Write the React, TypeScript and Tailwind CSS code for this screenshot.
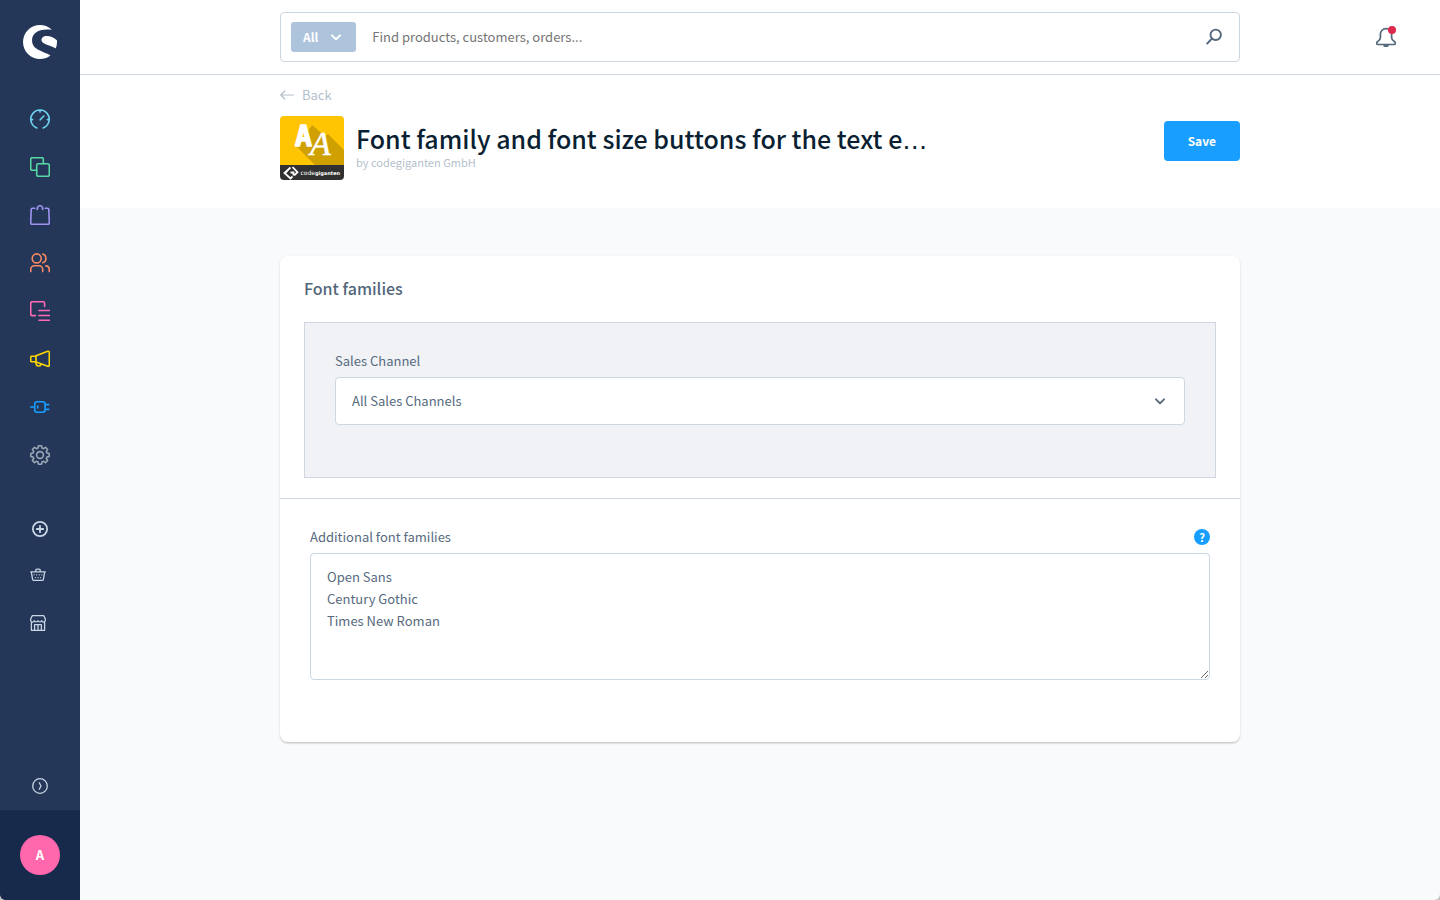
import { useState } from "react";
import type { ReactNode } from "react";
import { SiShopware } from "react-icons/si";

interface IconProps {
  size?: number;
  width?: number;
  children: ReactNode;
}

// Coordinates inside every icon are in screen pixels
const Icon = ({ size = 20, width = 1.6, children }: IconProps) => (
  <svg
    width={size}
    height={size}
    viewBox={`0 0 ${size} ${size}`}
    fill="none"
    stroke="currentColor"
    strokeWidth={width}
    strokeLinecap="round"
    strokeLinejoin="round"
    aria-hidden="true"
  >
    {children}
  </svg>
);

const DashboardIcon = () => (
  <Icon>
    <path d="M6.8 18.9A9.2 9.2 0 1 1 13.2 18.9M10 1.5v1.6M1 10.6h1.6M17.4 10.6H19M10.2 10.8l3.6-3.8" />
  </Icon>
);

const CatalogueIcon = () => (
  <Icon>
    <rect x="6.7" y="6.7" width="12.6" height="12.6" rx="1.6" />
    <path d="M6.7 13.3H2.2A1.5 1.5 0 0 1 .7 11.8V2.2A1.5 1.5 0 0 1 2.2.7h9.6a1.5 1.5 0 0 1 1.5 1.5v4.5" />
  </Icon>
);

const OrdersIcon = () => (
  <Icon>
    <path d="M4.8 3.2H2.4a1.2 1.2 0 0 0-1.2 1.2L.7 17.9a1.3 1.3 0 0 0 1.3 1.4h16a1.3 1.3 0 0 0 1.3-1.4l-.5-13.5a1.2 1.2 0 0 0-1.2-1.2h-2.4" />
    <path d="M7.3 4.4v-1A2.6 2.6 0 0 1 10 .8a2.6 2.6 0 0 1 2.7 2.6v1M7.3 3.2h.4M12.3 3.2h.4" />
  </Icon>
);

const CustomersIcon = () => (
  <Icon>
    <circle cx="6.7" cy="5.4" r="4.5" />
    <path d="M.8 18.6v-2.2a3.6 3.6 0 0 1 3.6-3.6h4.7a3.6 3.6 0 0 1 3.6 3.6v2.2M12.8 1.1a4.5 4.5 0 0 1 0 8.6M15.8 12.9a3.6 3.6 0 0 1 3.4 3.6v2.1" />
  </Icon>
);

const ContentIcon = () => (
  <Icon>
    <path d="M5.4 14.6H2.3a1.6 1.6 0 0 1-1.6-1.6V2.3A1.6 1.6 0 0 1 2.3.7H13a1.6 1.6 0 0 1 1.6 1.6v3.2M9 9.5h10.5M9 14.5h10.5M9 19.2h10.5" />
  </Icon>
);

const MarketingIcon = () => (
  <Icon>
    <path d="M6 6.8 17.8 2.3a1.1 1.1 0 0 1 1.5 1v13a1.1 1.1 0 0 1-1.5 1L6 13z" />
    <path d="M6 7.2H1.7a1 1 0 0 0-1 1v3.6a1 1 0 0 0 1 1H6M6 13v1.6a2.6 2.6 0 0 0 4.9 1" />
  </Icon>
);

const ExtensionsIcon = () => (
  <Icon>
    <path d="M.7 10h3.8M15.2 7.6h3.6M15.2 12.4h3.6M7.7 9v2" />
    <rect x="4.7" y="4.8" width="10.4" height="10.4" rx="2.4" />
  </Icon>
);

const SettingsIcon = () => (
  <Icon>
    <circle cx="10" cy="10" r="3.4" />
    <path d="M8.5.8h3l.5 2.3 1.5.6 2-1.3 2.1 2.1-1.3 2 .6 1.5 2.3.5v3l-2.3.5-.6 1.5 1.3 2-2.1 2.1-2-1.3-1.5.6-.5 2.3h-3L8 16.9l-1.5-.6-2 1.3-2.1-2.1 1.3-2-.6-1.5L.8 11.5v-3L3.1 8l.6-1.5-1.3-2 2.1-2.1 2 1.3L8 3.1z" />
  </Icon>
);

const PlusCircleIcon = () => (
  <Icon size={16} width={1.8}>
    <circle cx="8" cy="8" r="7.1" />
    <path d="M8 4.8v6.4M4.8 8h6.4" />
  </Icon>
);

const BasketIcon = () => (
  <Icon size={16} width={1.3}>
    <path d="M.7 4.8h14.6M1.3 5l1.3 7.3a1.4 1.4 0 0 0 1.4 1.1h8a1.4 1.4 0 0 0 1.4-1.1L14.7 5M5.8 4.6V3.4a1.2 1.2 0 0 1 1.2-1.2h2a1.2 1.2 0 0 1 1.2 1.2v1.2" />
    <path d="M4 7.8h.1M6.6 7.8h.1M9.2 7.8h.1M11.8 7.8h.1M5.4 10.6h.1M8 10.6h.1M10.5 10.6h.1" />
  </Icon>
);

const StoreIcon = () => (
  <Icon size={16} width={1.3}>
    <path d="M2.2.7h11.6l1.5 3.4v1.5a1.9 1.9 0 0 1-3.7 0 1.9 1.9 0 0 1-3.6 0 1.9 1.9 0 0 1-3.6 0 1.9 1.9 0 0 1-3.7 0V4.1zM1.4 7.5v7.8h13.2V7.5" />
    <path d="M4.6 15v-5.4h6.8V15M8 9.6V15" />
  </Icon>
);

const ChevronDown = () => (
  <Icon size={12} width={2}>
    <path d="m2 4.4 4 4 4-4" />
  </Icon>
);

const PluginLogo = () => (
  <svg width="64" height="64" viewBox="0 0 64 64" className="shrink-0 rounded" role="img" aria-label="codegiganten">
    <path fill="#ffc502" d="M0 0h64v49H0z" />
    <path fill="#cfa000" d="m32 9 13 11 3-2 16 16v15H35L17 31z" />
    <path fill="#313131" d="M0 49h64v15H0z" />
    <text
      x="15"
      y="30"
      fill="#fff"
      stroke="#fff"
      strokeWidth="1.4"
      strokeLinejoin="round"
      fontFamily="DejaVu Sans Mono"
      fontWeight="700"
      fontSize="28"
    >
      A
    </text>
    <text x="30" y="39" fill="#fff" stroke="#fff" strokeWidth="0.5" fontFamily="Liberation Serif" fontStyle="italic" fontSize="34">
      A
    </text>
    <path
      d="m10.5 51.5-6 5.5 6 5.5 2-2M12.5 51l5 5.2-3.2 3.2M10.5 56.5h3v3M8.8 53.2l-3.6 3.9"
      stroke="#fff"
      strokeWidth="1.8"
      fill="none"
    />
    <text x="20.5" y="58.5" fill="#fff" fontFamily="DejaVu Sans" fontSize="6">
      code
      <tspan fontWeight="700" fontSize="5">giganten</tspan>
    </text>
  </svg>
);

const mainMenu = [
  { label: "Dashboard", color: "text-[#6ed5f0]", icon: <DashboardIcon /> },
  { label: "Catalogues", color: "text-[#57d9a3]", icon: <CatalogueIcon /> },
  { label: "Orders", color: "text-[#a092f0]", icon: <OrdersIcon /> },
  { label: "Customers", color: "text-[#f88962]", icon: <CustomersIcon /> },
  { label: "Content", color: "text-[#ff68b4]", icon: <ContentIcon /> },
  { label: "Marketing", color: "text-[#ffd700]", icon: <MarketingIcon /> },
  { label: "Extensions", color: "text-[#189eff]", icon: <ExtensionsIcon /> },
  { label: "Settings", color: "text-[#9aa8b5]", icon: <SettingsIcon /> }
];

const Sidebar = () => (
  <aside className="flex w-20 shrink-0 flex-col bg-[#243758] text-[#c9d5e5]">
    <a href="#home" aria-label="Home" className="flex h-[84px] items-center justify-center text-white">
      <SiShopware size={34} />
    </a>

    <nav aria-label="Main menu" className="mt-[11px] flex flex-col">
      {mainMenu.map(({ label, color, icon }) => (
        <a
          key={label}
          href={`#${label.toLowerCase()}`}
          aria-label={label}
          className={`flex h-12 items-center justify-center ${color}`}
        >
          {icon}
        </a>
      ))}
    </nav>

    <nav aria-label="Sales channels" className="mt-7 flex flex-col">
      <button type="button" aria-label="Add sales channel" className="flex h-11 items-center justify-center">
        <PlusCircleIcon />
      </button>
      <a href="#headless" aria-label="Headless" className="flex h-12 items-center justify-center pr-1">
        <BasketIcon />
      </a>
      <a href="#storefront" aria-label="Storefront" className="flex h-12 items-center justify-center pr-1">
        <StoreIcon />
      </a>
    </nav>

    <button type="button" aria-label="Expand menu" className="mt-auto flex h-12 items-center justify-center">
      <Icon size={16} width={1.3}>
        <circle cx="8" cy="8" r="7.3" />
        <path d="M7.3 4.8 9 8l-1.7 3.2" />
      </Icon>
    </button>
    <div className="flex h-[90px] items-center justify-center bg-[#172a4b]">
      <button
        type="button"
        aria-label="User menu"
        className="h-10 w-10 rounded-full bg-[#ff68ac] text-[13px] font-bold text-white"
      >
        A
      </button>
    </div>
  </aside>
);

const TopBar = () => (
  <header className="grid grid-cols-[1fr_minmax(0,960px)_1fr] items-center border-b border-[#cdd7e1] py-3">
    <form className="col-start-2 flex h-[50px] items-center rounded border border-[#cdd7e1] px-2.5">
      <button
        type="button"
        className="flex h-[30px] items-center gap-3 rounded-[3px] bg-[#aec4dd] pr-3.5 pl-3 text-[12px] font-bold text-white"
      >
        All
        <ChevronDown />
      </button>
      <input
        type="search"
        aria-label="Search"
        placeholder="Find products, customers, orders..."
        className="ml-4 min-w-0 flex-1 text-[13px] outline-none placeholder:text-[#757575]"
      />
      <button type="submit" aria-label="Start search" className="mr-1.5 text-[#52667a]">
        <Icon size={18} width={1.9}>
          <circle cx="10.7" cy="6.8" r="5.2" />
          <path d="m7 10.6-4.8 4.9" />
        </Icon>
      </button>
    </form>
    <button type="button" aria-label="Notifications" className="relative mr-11 justify-self-end text-[#52667a]">
      <Icon size={20} width={1.7}>
        <path d="M10 1.6a5.6 5.6 0 0 0-5.6 5.6v3.2c0 1.8-.9 2.8-2.6 4-1.8 1.5-1.3 3.1.2 3.1h16c1.5 0 2-1.6.2-3.1-1.7-1.2-2.6-2.2-2.6-4V7.2A5.6 5.6 0 0 0 10 1.6zM8 17.8a2 1.6 0 0 0 4 0" />
      </Icon>
      <span className="absolute -top-px right-0 h-2 w-2 rounded-full bg-[#de294c]" />
    </button>
  </header>
);

const PageHead = () => (
  <div className="grid grid-cols-[1fr_minmax(0,960px)_1fr] pt-2.5 pb-7">
    <div className="col-start-2">
      <a href="#extensions" className="flex h-5 w-fit items-center gap-2 text-[13px] leading-5 text-[#b3bfcc]">
        <Icon size={14} width={1.2}>
          <path d="M.8 7h12.6M4.8 3 .8 7l4 4" />
        </Icon>
        Back
      </a>
      <div className="mt-[11px] flex items-start">
        <PluginLogo />
        <div className="ml-3 min-w-0 pt-1">
          <h1 className="text-[25px] leading-9 font-medium text-[#0b1f33]">
            Font family and font size buttons for the text e
            <span className="font-['DejaVu_Sans',sans-serif] leading-none">…</span>
          </h1>
          <p className="text-[11px] leading-3 text-[#b3bfcc]">by codegiganten GmbH</p>
        </div>
        <button
          type="button"
          className="mt-[5px] ml-auto h-10 rounded bg-[#189eff] px-6 text-[12px] font-bold text-white"
        >
          Save
        </button>
      </div>
    </div>
  </div>
);

const FontFamiliesCard = () => {
  const [channel, setChannel] = useState("all");
  const [families, setFamilies] = useState("Open Sans\nCentury Gothic\nTimes New Roman");

  return (
    <section className="col-start-2 rounded-lg bg-white shadow-[0_1px_1px_rgba(0,0,0,0.08),0_2px_1px_rgba(0,0,0,0.06),0_1px_3px_rgba(0,0,0,0.1)]">
      <div className="border-b border-[#cdd7e1] px-6 py-5">
        <h2 className="text-[16px] leading-6 font-medium text-[#52667a]">Font families</h2>
        <div className="mt-[22px] border border-[#cdd7e1] bg-[#f0f2f5] px-[30px] pt-7 pb-[52px]">
          <label htmlFor="sales-channel" className="block text-[13px] leading-5">
            Sales Channel
          </label>
          <div className="relative mt-1.5">
            <select
              id="sales-channel"
              value={channel}
              onChange={(e) => setChannel(e.target.value)}
              className="h-12 w-full appearance-none rounded border border-[#cdd7e1] bg-white px-4 text-[13px] outline-none"
            >
              <option value="all">All Sales Channels</option>
              <option value="storefront">Storefront</option>
              <option value="headless">Headless</option>
            </select>
            <span className="pointer-events-none absolute inset-y-0 right-[19px] flex items-center">
              <ChevronDown />
            </span>
          </div>
        </div>
      </div>

      <div className="px-[30px] pt-7 pb-[62px]">
        <div className="flex items-center justify-between">
          <label htmlFor="families" className="text-[13px] leading-5">
            Additional font families
          </label>
          <button
            type="button"
            aria-label="Help"
            className="h-4 w-4 rounded-full bg-[#189eff] text-[11px] leading-4 font-bold text-white"
          >
            ?
          </button>
        </div>
        <textarea
          id="families"
          value={families}
          onChange={(e) => setFamilies(e.target.value)}
          className="mt-1.5 block h-[127px] w-full resize rounded border border-[#cdd7e1] bg-white px-4 py-3 text-[13px] leading-[22px] outline-none"
        />
      </div>
    </section>
  );
};

export default function App() {
  return (
    <div className="bg-[#c4c4c4] font-['Noto_Sans_CJK_SC','Source_Sans_Pro',sans-serif] text-[#566a7e]">
      <div className="flex min-h-screen overflow-hidden rounded-b-md bg-[#f9fafc]">
        <Sidebar />
        <div className="min-w-0 flex-1">
          <div className="bg-white">
            <TopBar />
            <PageHead />
          </div>
          <main className="grid grid-cols-[1fr_minmax(0,960px)_1fr] py-12">
            <FontFamiliesCard />
          </main>
        </div>
      </div>
    </div>
  );
}
